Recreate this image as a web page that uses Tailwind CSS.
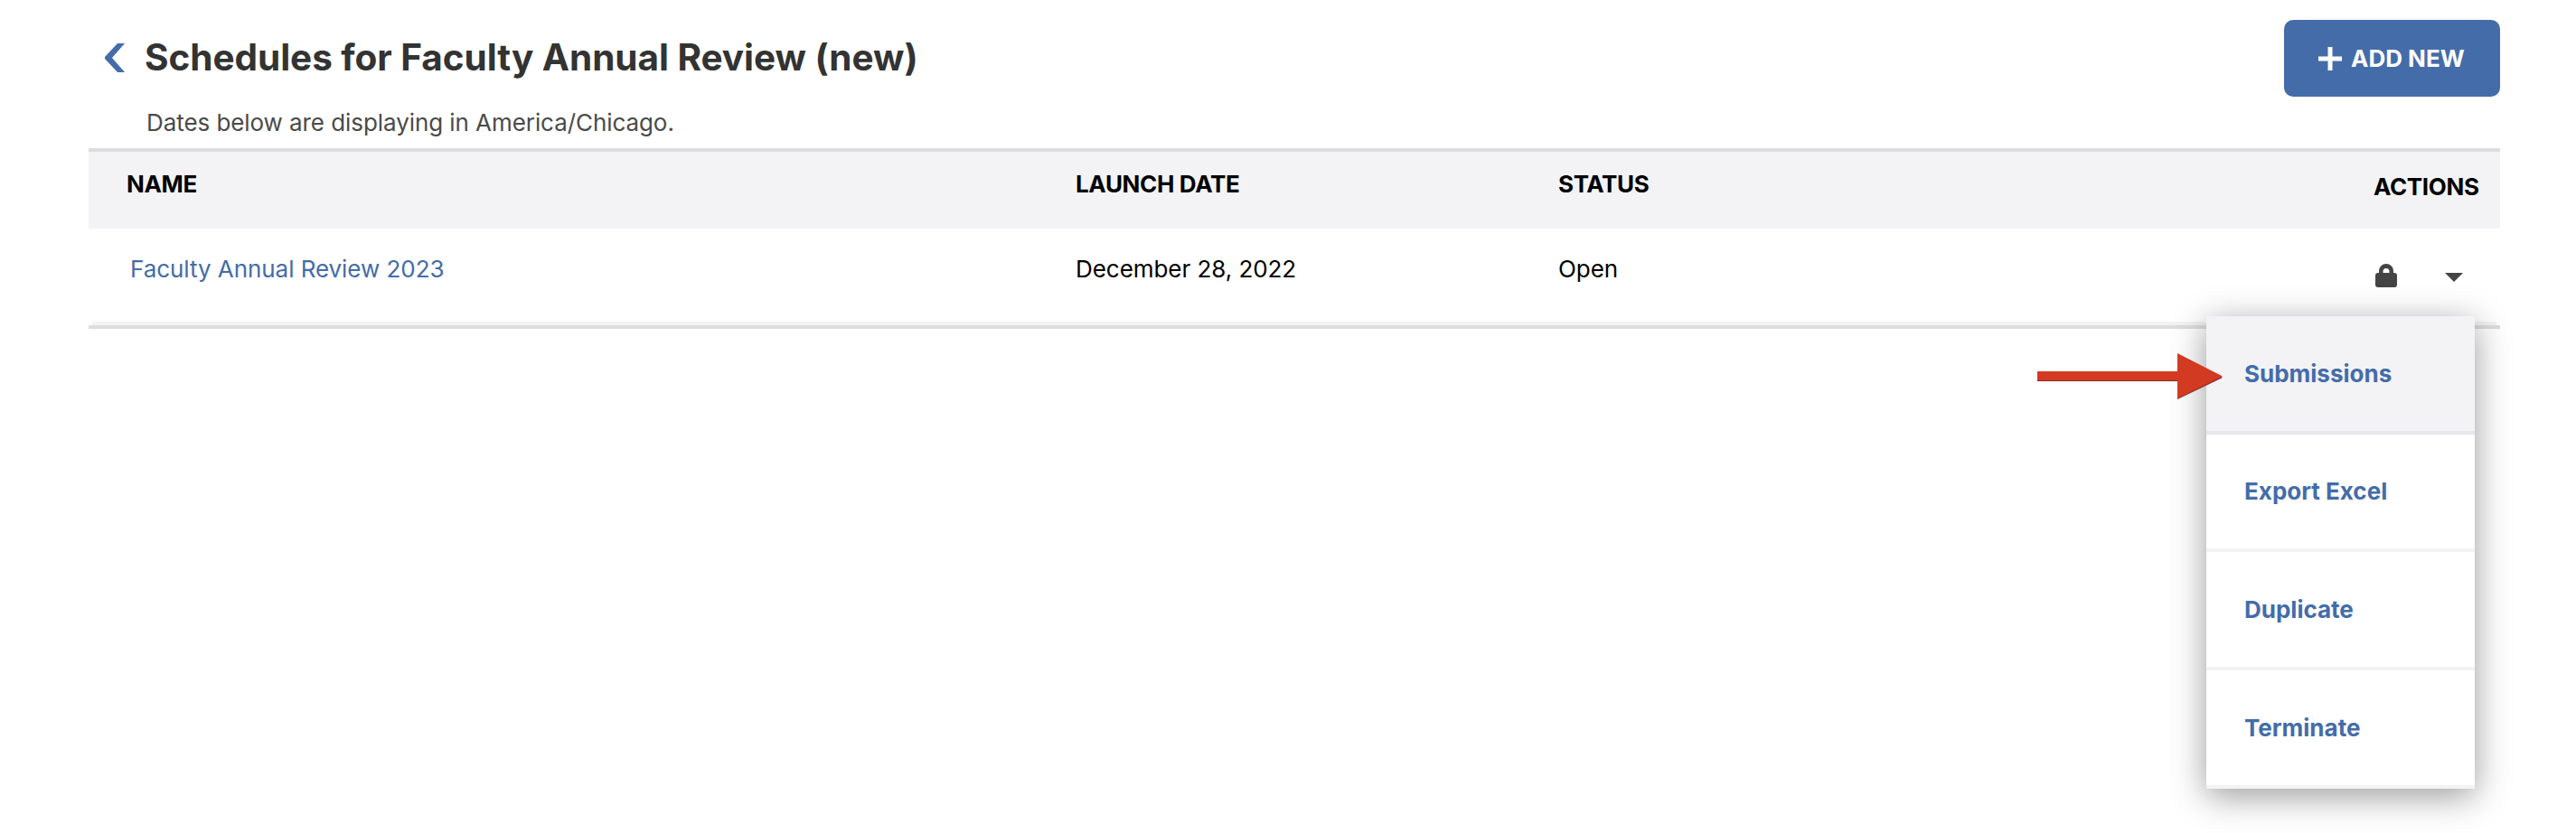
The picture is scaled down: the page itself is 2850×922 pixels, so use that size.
<!DOCTYPE html>
<html lang="en">
<head>
  <meta charset="UTF-8" />
  <meta name="viewport" content="width=device-width, initial-scale=1.0" />
  <title>Schedules for Faculty Annual Review (new)</title>
  <script src="https://cdn.jsdelivr.net/npm/@tailwindcss/browser@4"></script>
</head>
<body class="bg-white font-['Inter',sans-serif] text-[26px] leading-8 text-black">
  <div class="relative h-[922px] overflow-hidden pl-[98px] pr-[84px] pt-[22px]">

    <!-- Page header -->
    <header class="flex h-[85px] items-start justify-between">
      <div class="flex pl-[18px] pt-[26px]">
        <a href="#" aria-label="Back">
          <svg class="block h-8 w-[22px]" viewBox="0 0 22 32" fill="#446ca9">
            <path d="M14 0H22L8 16L22 32H14L0 17V15Z" />
          </svg>
        </a>
        <h1 class="-mt-[9px] ml-[22px] text-[40.5px] leading-[50px] font-bold tracking-[-0.05px] whitespace-nowrap text-[#333]">Schedules for Faculty Annual Review (new)</h1>
      </div>
      <button class="flex h-[85px] w-[239px] items-center rounded-[10px] bg-[#446ca9] pl-[38px] font-bold text-white">
        <svg class="h-[26px] w-[26px]" viewBox="0 0 26 26" fill="#fff">
          <path d="M10.500 0H15.500V10.500H26V15.500H15.500V26H10.500V15.500H0V10.500H10.500Z" />
        </svg>
        <span class="ml-[10px] whitespace-nowrap">ADD NEW</span>
      </button>
    </header>
    <p class="mt-[13px] h-11 pl-[64px] tracking-[-0.07px] text-[#4a4a4a]">Dates below are displaying in America/Chicago.</p>

    <!-- Schedules table -->
    <div class="border-y-4 border-[#ddd]">
      <div class="grid h-[85px] grid-cols-[1092px_534px_1fr_140px] bg-[#f3f3f5] pt-5 font-bold tracking-[-0.35px]">
        <div class="pl-[42px]">NAME</div>
        <div>LAUNCH DATE</div>
        <div>STATUS</div>
        <div class="pt-[3px]">ACTIONS</div>
      </div>
      <div class="mx-1 grid h-[107px] grid-cols-[1088px_534px_1fr_136px] border-b-4 border-[#f3f3f3] pt-[29px] tracking-[-0.05px]">
        <div class="pl-[42px]"><a href="#" class="text-[#446ca9]">Faculty Annual Review 2023</a></div>
        <div>December 28, 2022</div>
        <div>Open</div>
        <div class="flex items-start pt-[10px] pl-[2px]">
          <svg class="h-[26px] w-6" viewBox="0 0 24 26" fill="#444">
            <path fill-rule="evenodd" d="M4 10V8a8 8 0 0 1 16 0v2h1a3 3 0 0 1 3 3v10a3 3 0 0 1-3 3H3a3 3 0 0 1-3-3V13a3 3 0 0 1 3-3ZM8.500 10h7V8.500a3.500 3.500 0 0 0-7 0Z" />
          </svg>
          <svg class="mt-[10px] ml-[53px] h-[10px] w-5" viewBox="0 0 20 10" fill="#444"><path d="M0 0H20L10 10Z" /></svg>
        </div>
      </div>
    </div>

    <!-- Actions dropdown -->
    <div class="absolute top-[350px] left-[2441px] w-[297px] bg-white font-bold text-[#446ca9] shadow-[0_8px_36px_rgba(0,0,0,0.4)]">
      <a href="#" class="flex h-[131px] items-center border-b-4 border-[#e6e6eb] bg-[#f3f3f5] pl-[42px]">Submissions</a>
      <a href="#" class="flex h-[130px] items-center border-b-4 border-[#f3f3f5] pl-[42px]">Export Excel</a>
      <a href="#" class="flex h-[131px] items-center border-b-4 border-[#f3f3f5] pl-[42px]">Duplicate</a>
      <a href="#" class="flex h-[131px] items-center border-b-4 border-[#f3f3f5] pl-[42px]">Terminate</a>
    </div>

    <!-- Pointer arrow -->
    <svg class="absolute top-[390px] left-[2254px] h-[52px] w-[206px]" viewBox="0 0 206 52">
      <path d="M0 22H155V2L205 28L155 52V32H0Z" fill="#8c2a2a" />
      <path d="M0 21H155V1L205 26.500L155 51V31H0Z" fill="#d23a22" />
    </svg>
  </div>
</body>
</html>
